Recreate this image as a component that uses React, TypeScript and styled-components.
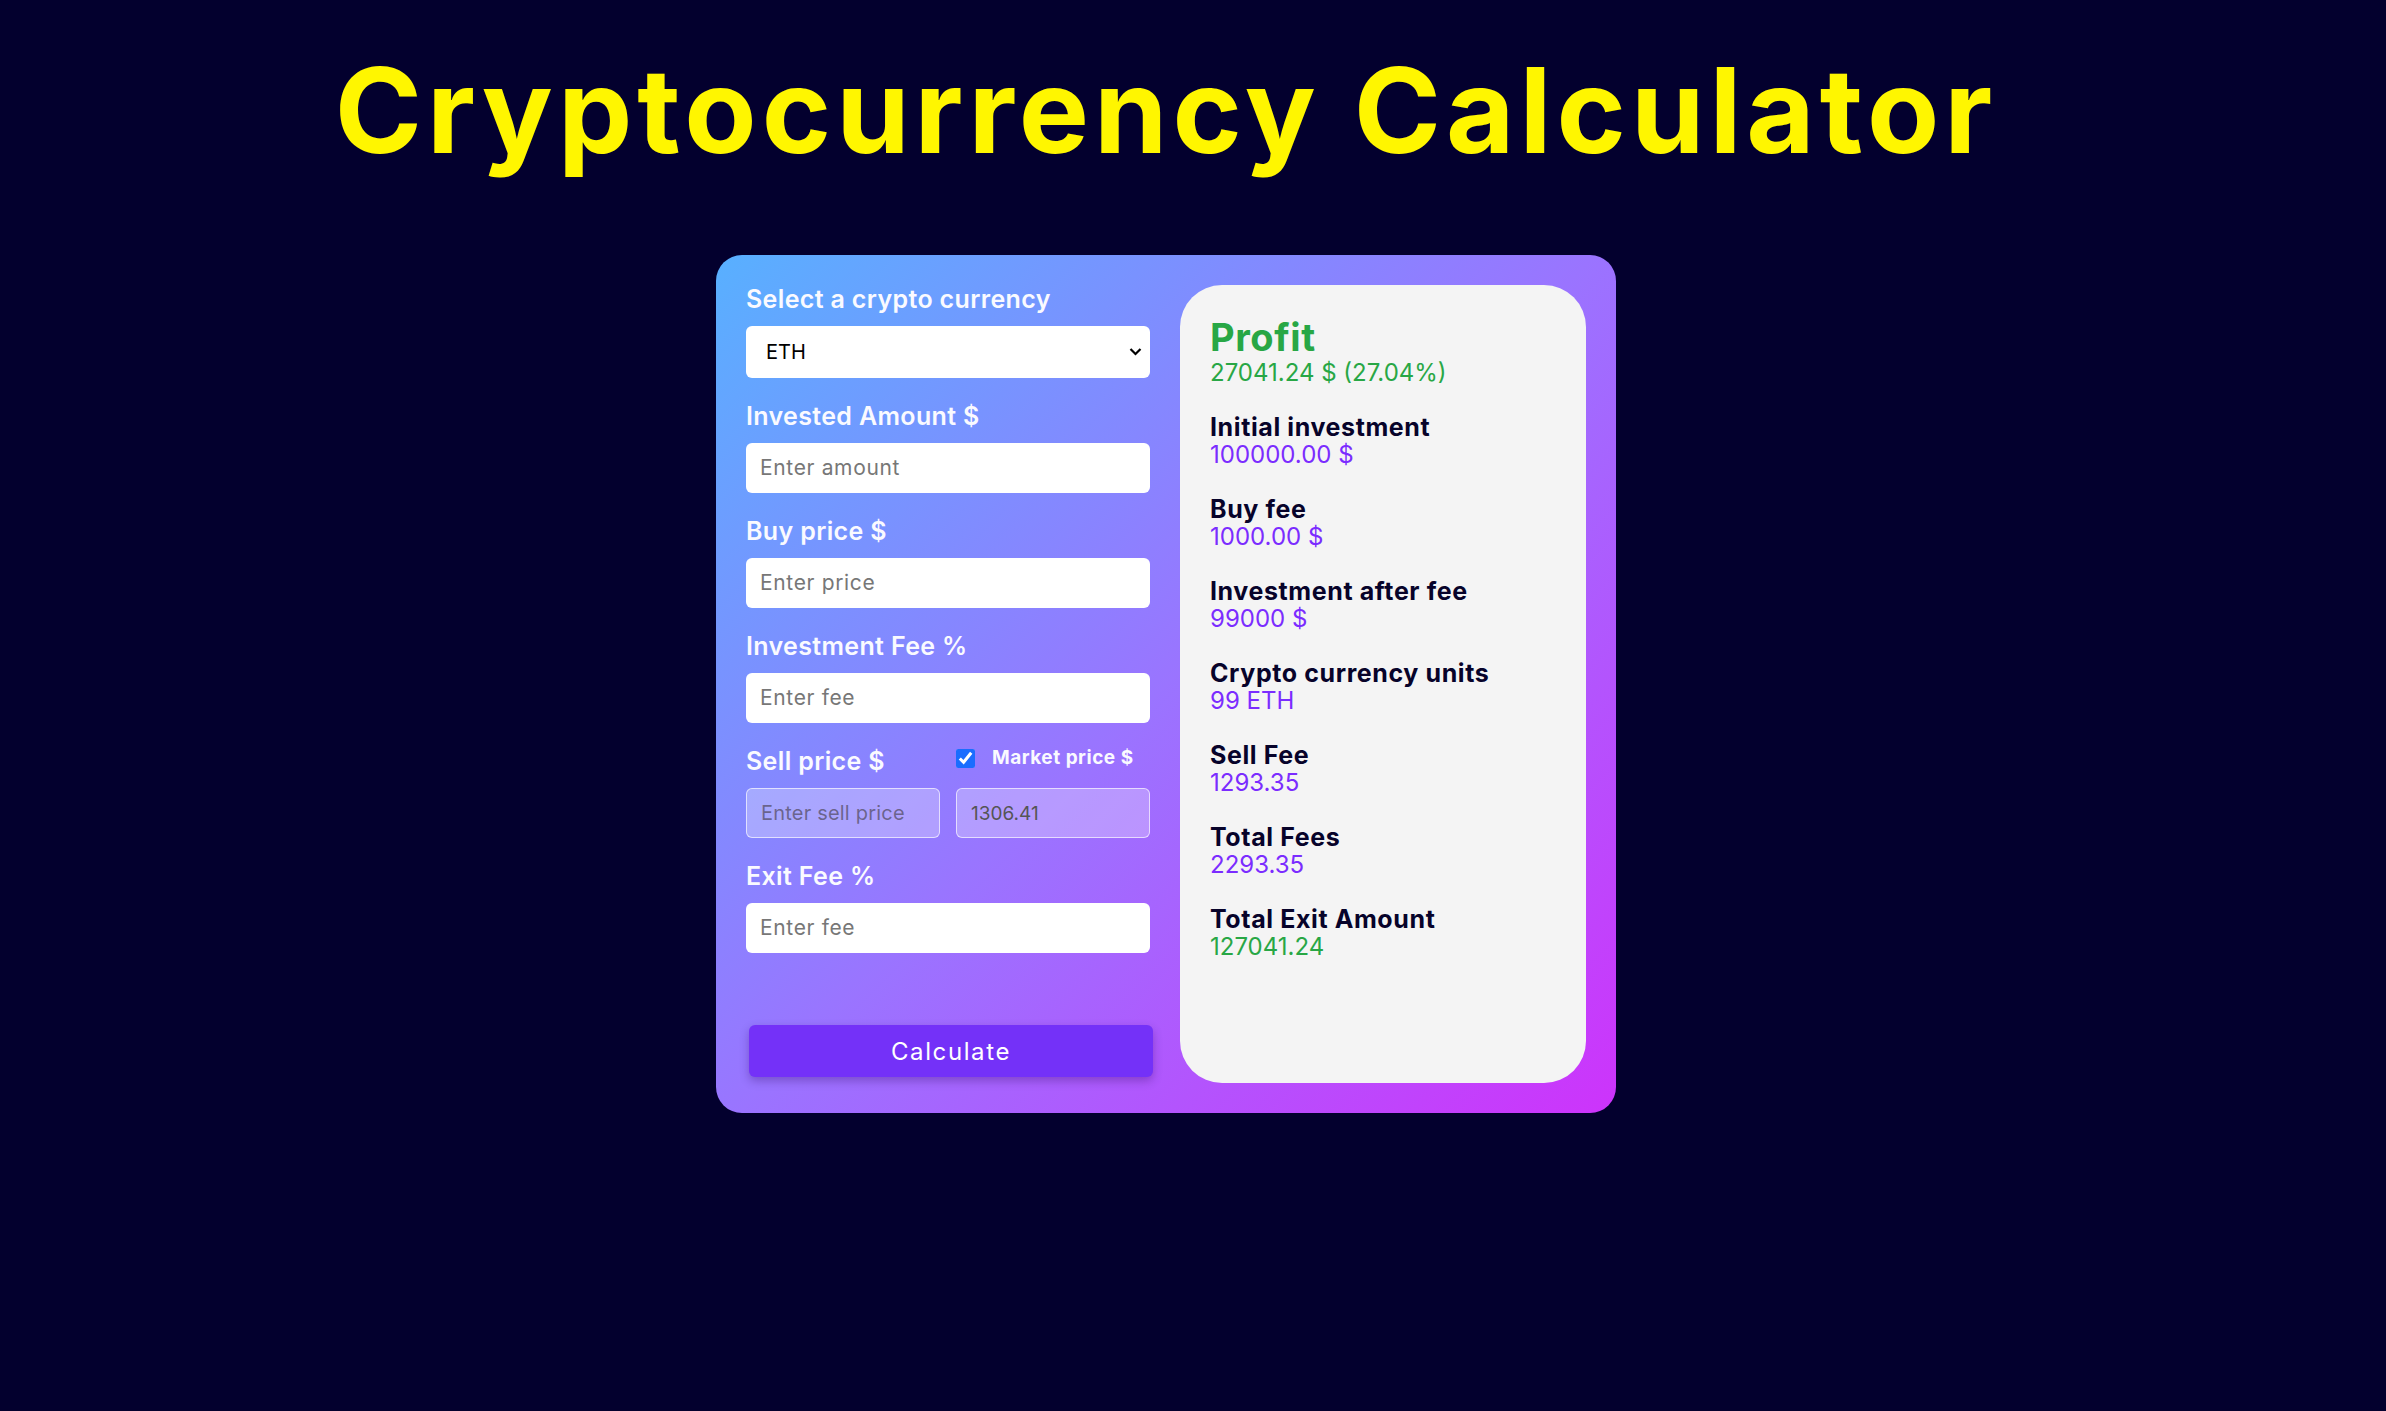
import React from "react";
import styled, { createGlobalStyle } from "styled-components";

const GlobalStyle = createGlobalStyle`
  html, body { margin: 0; padding: 0; background: #03002e; }
  body { font-family: Inter, "Open Sans", sans-serif; }
  *, *::before, *::after { box-sizing: border-box; }
`;

const Page = styled.main`
  min-height: 100vh;
  display: flex;
  flex-direction: column;
  align-items: center;
  padding: 51px 54px 0 0;
`;

const Title = styled.h1`
  margin: 0;
  font-size: 118px;
  line-height: 1;
  font-weight: 700;
  color: #fff600;
  letter-spacing: 5px;
`;

const Card = styled.section`
  margin-top: 86px;
  display: grid;
  grid-template-columns: 404px 406px;
  gap: 30px;
  padding: 30px;
  border-radius: 26px;
  background: linear-gradient(135deg, #58b0ff 0%, #9a74ff 50%, #cd33fb 100%);
`;

const Form = styled.div`
  display: flex;
  flex-direction: column;
`;

const Field = styled.div`
  display: flex;
  flex-direction: column;
  margin-bottom: 24px;
`;

const Label = styled.label`
  font-size: 25px;
  line-height: 28px;
  font-weight: 600;
  letter-spacing: 0.35px;
  color: #fafaff;
  margin-bottom: 13px;
`;

const SelectWrap = styled.div`
  position: relative;
`;

const Select = styled.select`
  width: 100%;
  height: 52px;
  border: none;
  border-radius: 6px;
  background: #ffffff;
  appearance: none;
  padding: 0 0 0 20px;
  font-family: inherit;
  font-size: 20px;
  color: #000;
`;

const Chevron = styled.svg`
  position: absolute;
  right: 8px;
  top: 21px;
  width: 13px;
  height: 9px;
  pointer-events: none;
`;

const Input = styled.input<{ $muted?: boolean }>`
  width: 100%;
  height: 50px;
  border-radius: 6px;
  padding: 0 14px;
  font-family: inherit;
  font-size: 19px;
  color: ${(p) => (p.$muted ? "#555" : "#222")};
  background: ${(p) => (p.$muted ? "rgba(255,255,255,0.28)" : "#ffffff")};
  border: ${(p) => (p.$muted ? "1.5px solid rgba(255,255,255,0.65)" : "none")};
  outline: none;
  &::placeholder {
    font-size: ${(p) => (p.$muted ? "20px" : "21px")};
    letter-spacing: ${(p) => (p.$muted ? "0.2px" : "0.65px")};
    color: ${(p) => (p.$muted ? "rgba(95,88,120,0.85)" : "#777")};
  }
`;

const Pair = styled.div`
  display: grid;
  grid-template-columns: 1fr 1fr;
  column-gap: 16px;
  align-items: start;
`;

const CheckLabel = styled.label`
  display: flex;
  align-items: center;
  gap: 17px;
  height: 22px;
  font-size: 19px;
  line-height: 22px;
  font-weight: 700;
  letter-spacing: 0.5px;
  color: #fafaff;
`;

const Check = styled.input`
  margin: 0;
  width: 19px;
  height: 19px;
  accent-color: #1a6dff;
`;

const Button = styled.button`
  margin: 48px 0 6px 3px;
  height: 52px;
  width: 404px;
  border: none;
  border-radius: 6px;
  background: #7431f8;
  color: #fff;
  font-family: inherit;
  font-size: 24px;
  letter-spacing: 1.6px;
  font-weight: 400;
  box-shadow: 0 4px 10px rgba(40, 0, 90, 0.3);
  cursor: pointer;
`;

const Results = styled.div`
  background: #f4f4f4;
  border-radius: 42px;
  padding: 32px 30px;
  display: flex;
  flex-direction: column;
`;

const ProfitTitle = styled.h2`
  margin: 0;
  font-size: 38px;
  line-height: 40px;
  font-weight: 700;
  letter-spacing: 0.6px;
  color: #28a745;
`;

const Value = styled.div<{ $tone: "green" | "purple" }>`
  font-size: 24px;
  line-height: 28px;
  font-weight: 400;
  color: ${(p) => (p.$tone === "green" ? "#28a745" : "#7b2cff")};
`;

const ProfitValue = styled(Value)`
  margin-top: 2px;
`;

const Item = styled.div`
  margin-top: 26px;
  display: flex;
  flex-direction: column;
`;

const ItemLabel = styled.div`
  font-size: 25px;
  line-height: 28px;
  font-weight: 700;
  letter-spacing: 0.6px;
  color: #07032a;
`;

const results: { label: string; value: string; tone: "green" | "purple" }[] = [
  { label: "Initial investment", value: "100000.00 $", tone: "purple" },
  { label: "Buy fee", value: "1000.00 $", tone: "purple" },
  { label: "Investment after fee", value: "99000 $", tone: "purple" },
  { label: "Crypto currency units", value: "99 ETH", tone: "purple" },
  { label: "Sell Fee", value: "1293.35", tone: "purple" },
  { label: "Total Fees", value: "2293.35", tone: "purple" },
  { label: "Total Exit Amount", value: "127041.24", tone: "green" },
];

export default function App() {
  return (
    <>
      <GlobalStyle />
      <Page>
        <Title>Cryptocurrency Calculator</Title>
        <Card>
          <Form>
            <Field>
              <Label>Select a crypto currency</Label>
              <SelectWrap>
                <Select defaultValue="ETH">
                  <option value="BTC">BTC</option>
                  <option value="ETH">ETH</option>
                </Select>
                <Chevron viewBox="0 0 13 9">
                  <path d="M1.5 2 L6.5 7 L11.5 2" fill="none" stroke="#000" strokeWidth="2.2" />
                </Chevron>
              </SelectWrap>
            </Field>
            <Field>
              <Label>Invested Amount $</Label>
              <Input placeholder="Enter amount" />
            </Field>
            <Field>
              <Label>Buy price $</Label>
              <Input placeholder="Enter price" />
            </Field>
            <Field>
              <Label>Investment Fee %</Label>
              <Input placeholder="Enter fee" />
            </Field>
            <Field>
              <Pair>
                <Label>Sell price $</Label>
                <CheckLabel>
                  <Check type="checkbox" defaultChecked />
                  Market price $
                </CheckLabel>
                <Input $muted placeholder="Enter sell price" disabled />
                <Input $muted value="1306.41" readOnly />
              </Pair>
            </Field>
            <Field>
              <Label>Exit Fee %</Label>
              <Input placeholder="Enter fee" />
            </Field>
            <Button>Calculate</Button>
          </Form>
          <Results>
            <ProfitTitle>Profit</ProfitTitle>
            <ProfitValue $tone="green">27041.24 $ (27.04%)</ProfitValue>
            {results.map((r) => (
              <Item key={r.label}>
                <ItemLabel>{r.label}</ItemLabel>
                <Value $tone={r.tone}>{r.value}</Value>
              </Item>
            ))}
          </Results>
        </Card>
      </Page>
    </>
  );
}
